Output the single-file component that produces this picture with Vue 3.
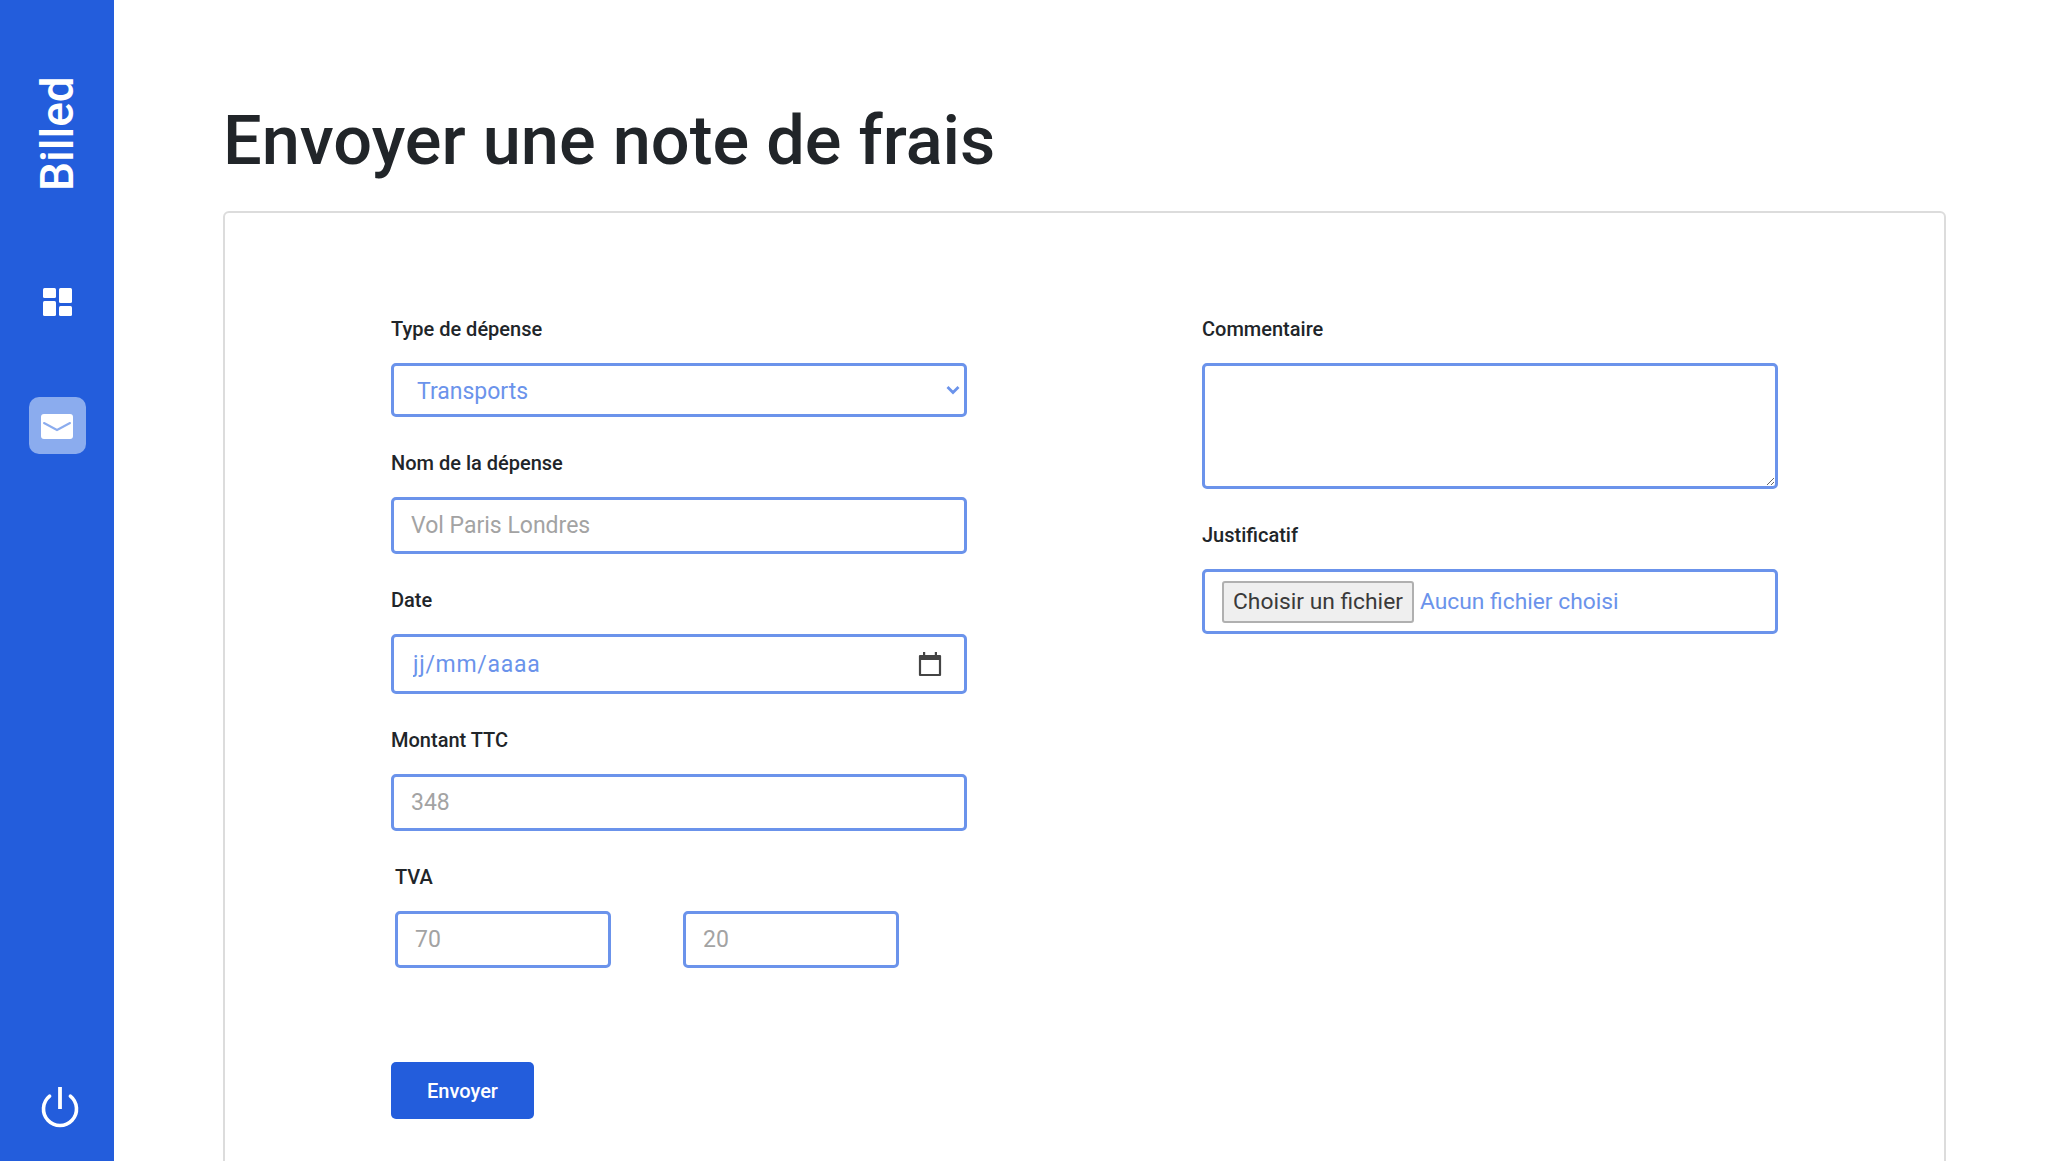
<script setup>
import { ref } from "vue";

const type = ref("Transports");
const types = ["Transports", "Restaurants et bars", "Hôtel et logement", "Services en ligne", "IT et électronique", "Equipement et matériel", "Fournitures de bureau"];
</script>

<template>
  <div class="layout">
    <aside class="sidebar">
      <div class="logo">Billed</div>
      <svg class="icon-windows" width="29" height="28" viewBox="0 0 29 28">
        <rect x="0" y="0" width="13" height="10" rx="1.5" fill="#fff" />
        <rect x="0" y="13" width="13" height="15" rx="1.5" fill="#fff" />
        <rect x="16" y="0" width="13" height="15" rx="1.5" fill="#fff" />
        <rect x="16" y="18" width="13" height="10" rx="1.5" fill="#fff" />
      </svg>
      <div class="mail-tile">
        <svg class="mail" width="32" height="25" viewBox="0 0 32 25">
          <rect width="32" height="25" rx="3" fill="#fff" />
          <path d="M3 9 L16 16 L29 9" fill="none" stroke="#8bacee" stroke-width="2" stroke-linecap="round" />
        </svg>
      </div>
      <svg class="icon-power" width="38" height="42" viewBox="0 0 38 42">
        <path d="M8.6 10.2 A16.5 16.5 0 1 0 29.4 10.2" fill="none" stroke="#fff" stroke-width="3.6" stroke-linecap="round" />
        <path d="M19 1 V23" fill="none" stroke="#fff" stroke-width="3.8" />
      </svg>
    </aside>

    <main class="content">
      <h1 class="title">Envoyer une note de frais</h1>
      <form class="card" @submit.prevent>
        <div class="columns">
          <div class="col">
            <div class="field">
              <label>Type de dépense</label>
              <div class="select-wrap">
                <select v-model="type" class="control select">
                  <option v-for="t in types" :key="t">{{ t }}</option>
                </select>
                <svg class="chevron" width="14" height="10" viewBox="0 0 14 10">
                  <path d="M1.5 2 L7 7.5 L12.5 2" fill="none" stroke="#6b93eb" stroke-width="2.8" />
                </svg>
              </div>
            </div>
            <div class="field">
              <label>Nom de la dépense</label>
              <input class="control input" type="text" placeholder="Vol Paris Londres" />
            </div>
            <div class="field">
              <label>Date</label>
              <div class="control date">
                <input class="date-text" type="text" placeholder="jj/mm/aaaa" />
                <svg width="24" height="26" viewBox="0 0 24 26">
                  <path d="M2 5 H22 V24 H2 Z" fill="none" stroke="#444" stroke-width="2.2" stroke-linejoin="round" />
                  <rect x="2" y="4" width="20" height="5" fill="#444" />
                  <rect x="5" y="1" width="2.2" height="4" fill="#444" />
                  <rect x="16.8" y="1" width="2.2" height="4" fill="#444" />
                </svg>
              </div>
            </div>
            <div class="field">
              <label>Montant TTC</label>
              <input class="control input" type="text" placeholder="348" />
            </div>
            <div class="field tva">
              <label>TVA</label>
              <div class="tva-row">
                <input class="control input small" type="text" placeholder="70" />
                <input class="control input small" type="text" placeholder="20" />
              </div>
            </div>
          </div>

          <div class="col">
            <div class="field">
              <label>Commentaire</label>
              <textarea class="control textarea"></textarea>
            </div>
            <div class="field">
              <label>Justificatif</label>
              <div class="control file">
                <button type="button" class="file-btn">Choisir un fichier</button>
                <span class="file-name">Aucun fichier choisi</span>
              </div>
            </div>
          </div>
        </div>
        <button type="submit" class="submit">Envoyer</button>
      </form>
    </main>
  </div>
</template>

<style>
html,
body {
  margin: 0;
  overflow: hidden;
}
</style>

<style scoped>
.layout {
  display: flex;
  height: 1161px;
  overflow: hidden;
  font-family: Roboto, "Liberation Sans", sans-serif;
  color: #212529;
  background: #fff;
}
.sidebar {
  width: 114px;
  flex: none;
  background: #235ddc;
  display: flex;
  flex-direction: column;
  align-items: center;
  padding-top: 81px;
  box-sizing: border-box;
}
.logo {
  writing-mode: vertical-rl;
  transform: rotate(180deg);
  color: #fff;
  font-size: 46px;
  font-weight: 500;
  line-height: 46px;
  height: 110px;
  text-align: left;
}
.icon-windows {
  margin-top: 97px;
}
.mail-tile {
  margin-top: 81px;
  width: 57px;
  height: 57px;
  border-radius: 10px;
  background: #8bacee;
  display: flex;
  align-items: center;
  justify-content: center;
}
.mail {
  margin-top: 2px;
}
.icon-power {
  margin-top: auto;
  margin-bottom: 33px;
  margin-left: 6px;
}
.content {
  flex: 1;
  padding: 101px 102px 0 109px;
  min-width: 0;
}
.title {
  margin: 0 0 30px;
  font-size: 68.5px;
  line-height: 80px;
  font-weight: 500;
}
.card {
  border: 2px solid #dcdcdc;
  border-radius: 6px;
  padding: 104px 166px 60px;
  height: 1100px;
  box-sizing: border-box;
}
.columns {
  display: grid;
  grid-template-columns: 576px 576px;
  justify-content: space-between;
}
.field {
  margin-bottom: 34px;
  display: flex;
  flex-direction: column;
}
label {
  font-size: 20px;
  line-height: 24px;
  font-weight: 500;
  margin-bottom: 22px;
}
.control {
  box-sizing: border-box;
  width: 100%;
  border: 3px solid #6b93eb;
  border-radius: 5px;
  background: #fff;
  font-family: inherit;
  font-size: 23px;
  color: #6b93eb;
  outline: none;
}
.control::placeholder {
  color: #a3a3a3;
  opacity: 1;
}
.select-wrap {
  position: relative;
}
.select {
  display: block;
  height: 54px;
  padding: 2px 23px 0;
  appearance: none;
}
.chevron {
  position: absolute;
  right: 7px;
  top: 22px;
}
.input {
  height: 57px;
  padding: 0 17px;
}
.date {
  height: 60px;
  display: flex;
  align-items: center;
  padding: 0 22px 0 19px;
}
.date-text {
  flex: 1;
  min-width: 0;
  border: 0;
  padding: 0;
  outline: none;
  font: inherit;
  letter-spacing: 0.7px;
  color: #6b93eb;
}
.date-text::placeholder {
  color: #6b93eb;
  opacity: 1;
}
.tva {
  padding-left: 4px;
}
.tva-row {
  display: flex;
  gap: 72px;
}
.small {
  width: 216px;
}
.textarea {
  display: block;
  height: 126px;
  padding: 10px 17px;
  resize: vertical;
}
.file {
  height: 65px;
  display: flex;
  align-items: center;
  padding: 0 17px;
  gap: 6px;
  font-size: 22.8px;
}
.file-btn {
  width: 192px;
  height: 42px;
  padding: 0;
  border: 2px solid #b0b0b0;
  border-radius: 3px;
  background: #efefef;
  color: #3a3a3a;
  font: inherit;
}
.submit {
  margin-top: 60px;
  width: 143px;
  height: 57px;
  border: 0;
  border-radius: 5px;
  background: #235ddc;
  color: #fff;
  font-family: inherit;
  font-size: 20px;
  font-weight: 500;
}
</style>
